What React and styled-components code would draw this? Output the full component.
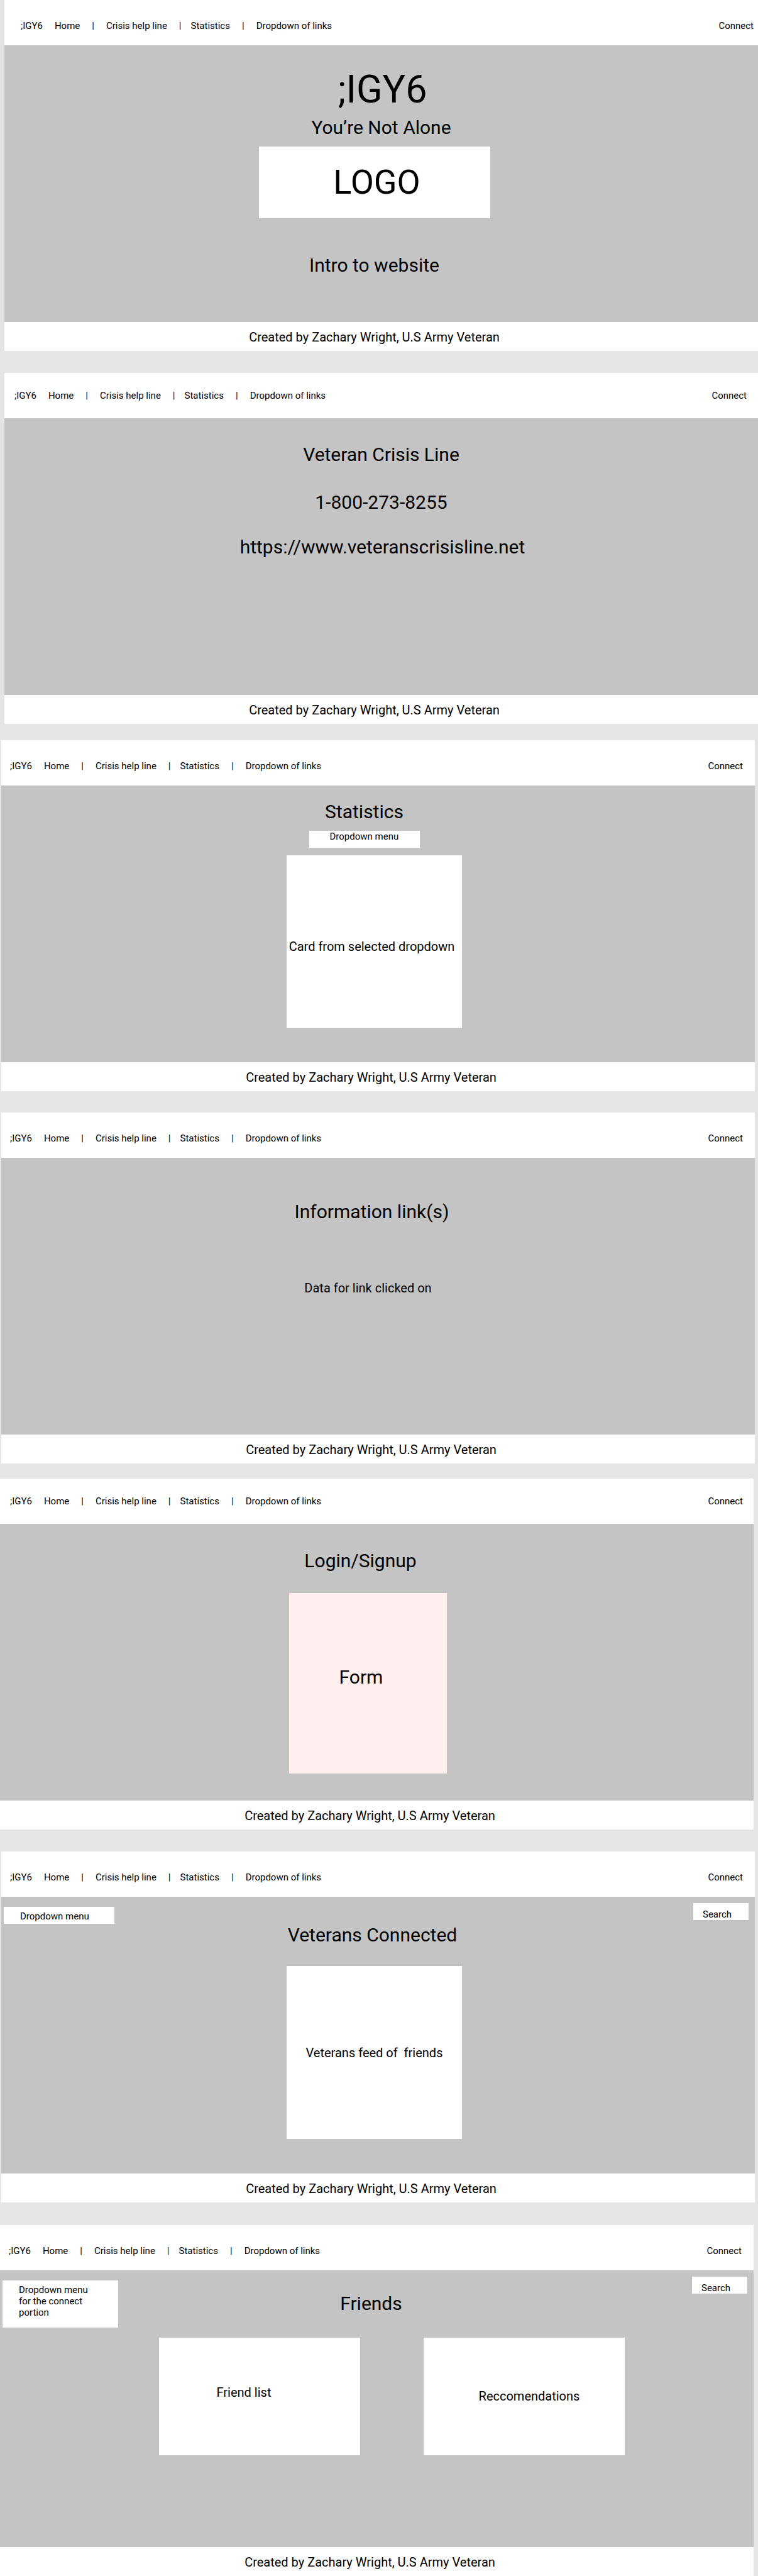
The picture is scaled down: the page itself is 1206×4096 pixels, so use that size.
import React from "react";
import styled, { createGlobalStyle } from "styled-components";

const GlobalStyle = createGlobalStyle`
  *, *::before, *::after { box-sizing: border-box; }
  body {
    margin: 0;
    background: #e5e5e5;
    color: #000;
    font-family: Roboto, "Liberation Sans", sans-serif;
    font-size: 15px;
    line-height: 18px;
  }
  a { color: inherit; text-decoration: none; }
  button, input, select { font: inherit; color: inherit; border: 0; border-radius: 0; }
`;

/* Moves a centred item towards one side by reserving room on the other. */
const side = ({ $room = 0 }) =>
  $room >= 0 ? `margin-right: ${$room}px;` : `margin-left: ${-$room}px;`;

const Board = styled.div`
  display: flex;
  flex-direction: column;
`;

const Frame = styled.section`
  display: flex;
  flex-direction: column;
  margin: ${({ $gap = 0 }) => $gap}px ${({ $right = 0 }) => $right}px 0 ${({ $left = 0 }) => $left}px;
`;

const Header = styled.header`
  display: flex;
  align-items: center;
  justify-content: space-between;
  min-height: 72px;
  padding: ${({ $low }) => ($low ? 10 : 0)}px ${({ $end }) => $end}px 0 ${({ $start }) => $start}px;
  background: #fff;
`;

const Nav = styled.nav`
  display: flex;
  flex-wrap: wrap;
  align-items: center;
`;

const NavLink = styled.a`
  white-space: nowrap;
`;

const Brand = styled(NavLink)`
  margin-right: 19px;
`;

const NavMenu = styled.button`
  padding: 0;
  background: none;
`;

const Divider = styled.span`
  margin: 0 ${({ $tight }) => ($tight ? 15 : 19)}px 0 19px;
`;

const Main = styled.div`
  display: flex;
  flex-direction: column;
  align-items: center;
  min-height: 440px;
  background: #c4c4c4;
`;

const Title = styled.h1`
  margin-top: 34px;
  margin-bottom: 0;
  ${side}
  font-size: 61px;
  font-weight: 400;
  line-height: 72px;
`;

const Heading = styled.h2`
  margin-top: ${({ $top = 0 }) => $top}px;
  margin-bottom: 0;
  ${side}
  font-size: 30px;
  font-weight: 400;
  line-height: 36px;
`;

const Note = styled.p`
  margin-top: ${({ $top = 0 }) => $top}px;
  margin-bottom: ${({ $bottom = 0 }) => $bottom}px;
  ${side}
  font-size: 20px;
  line-height: 24px;
  white-space: pre;
`;

const Card = styled.div`
  display: flex;
  align-items: center;
  justify-content: center;
  width: ${({ $width }) => $width}px;
  max-width: 100%;
  min-height: ${({ $height }) => $height}px;
  margin-top: ${({ $top = 0 }) => $top}px;
  ${side}
  background: ${({ $tint }) => ($tint ? "#ffefee" : "#fff")};
`;

const LogoText = styled.span`
  margin-left: 8px;
  font-size: 54px;
  line-height: 64px;
`;

const FormText = styled(Heading)`
  margin-bottom: 20px;
`;

const Picker = styled.select`
  appearance: none;
  width: 176px;
  height: 27px;
  margin-top: ${({ $top }) => $top}px;
  ${side}
  padding: ${({ $inset }) => $inset};
  background: #fff;
  line-height: 18px;
`;

const MenuButton = styled.button`
  width: 184px;
  min-height: 75px;
  margin-top: 16px;
  padding: 6px 40px 15px 26px;
  background: #fff;
  text-align: left;
`;

const Search = styled.input`
  appearance: none;
  justify-self: end;
  width: 88px;
  height: 27px;
  margin-top: 10px;
  padding: 8px 8px 0 15px;
  background: #fff;
  &::placeholder { color: #000; opacity: 1; }
`;

const TopRow = styled.div`
  display: grid;
  grid-template-columns: 1fr auto 1fr;
  align-items: start;
  align-self: stretch;
  padding: 0 10px 0 4px;
`;

const CardRow = styled.div`
  display: flex;
  flex-wrap: wrap;
  justify-content: center;
  gap: 101px;
  margin-top: 16px;
  ${side}
`;

const Footer = styled.footer`
  display: flex;
  align-items: center;
  justify-content: center;
  min-height: 46px;
  padding: 1px 22px 0 0;
  background: #fff;
  font-size: 20px;
  line-height: 24px;
`;

function Page({ gap, left, right, start, end, low, children }) {
  return (
    <Frame $gap={gap} $left={left} $right={right}>
      <Header $start={start} $end={end} $low={low}>
        <Nav>
          <Brand href="#">;IGY6</Brand>
          <NavLink href="#">Home</NavLink>
          <Divider>|</Divider>
          <NavLink href="#">Crisis help line</NavLink>
          <Divider $tight>|</Divider>
          <NavLink href="#">Statistics</NavLink>
          <Divider>|</Divider>
          <NavMenu type="button" aria-haspopup="menu">Dropdown of links</NavMenu>
        </Nav>
        <NavLink href="#">Connect</NavLink>
      </Header>
      <Main>{children}</Main>
      <Footer>Created by Zachary Wright, U.S Army Veteran</Footer>
    </Frame>
  );
}

export default function App() {
  return (
    <Board>
      <GlobalStyle />

      <Page left={7} start={26} end={7} low>
        <Title $room={-4}>;IGY6</Title>
        <Heading $top={7}>You’re Not Alone</Heading>
        <Card $width={368} $height={114} $top={12} $room={22}>
          <LogoText>LOGO</LogoText>
        </Card>
        <Heading as="p" $top={57} $room={22}>Intro to website</Heading>
      </Page>

      <Page gap={35} left={7} start={16} end={18}>
        <Heading $top={40}>Veteran Crisis Line</Heading>
        <Heading as="a" href="tel:1-800-273-8255" $top={40}>1-800-273-8255</Heading>
        <Heading as="a" href="https://www.veteranscrisisline.net" $top={35} $room={-4}>
          https://www.veteranscrisisline.net
        </Heading>
      </Page>

      <Page gap={26} left={2} right={5} start={14} end={19} low>
        <Heading $top={24} $room={44}>Statistics</Heading>
        <Picker aria-label="Statistic" $top={12} $room={44} $inset="0 0 9px 33px">
          <option>Dropdown menu</option>
        </Picker>
        <Card $width={279} $height={275} $top={12} $room={12}>
          <Note $top={14} $room={8}>Card from selected dropdown</Note>
        </Card>
      </Page>

      <Page gap={34} left={2} right={5} start={14} end={19} low>
        <Heading $top={68} $room={20}>Information link(s)</Heading>
        <Note $top={91} $room={32}>Data for link clicked on</Note>
      </Page>

      <Page gap={24} right={7} start={16} end={17}>
        <Heading $top={41} $room={52}>Login/Signup</Heading>
        <Card $width={251} $height={287} $top={33} $room={28} $tint>
          <FormText as="p" $room={22}>Form</FormText>
        </Card>
      </Page>

      <Page gap={35} left={2} right={5} start={14} end={19} low>
        <TopRow>
          <Picker aria-label="Section" $top={16} $inset="6px 0 3px 26px">
            <option>Dropdown menu</option>
          </Picker>
          <Heading $top={43} $room={12}>Veterans Connected</Heading>
          <Search type="search" aria-label="Search" placeholder="Search" />
        </TopRow>
        <Card $width={279} $height={275} $top={31} $room={12}>
          <Note>{"Veterans feed of  friends"}</Note>
        </Card>
      </Page>

      <Page gap={36} right={7} start={14} end={19} low>
        <TopRow>
          <MenuButton type="button" aria-haspopup="menu">
            Dropdown menu for the connect portion
          </MenuButton>
          <Heading $top={35} $room={12}>Friends</Heading>
          <Search type="search" aria-label="Search" placeholder="Search" />
        </TopRow>
        <CardRow $room={-48}>
          <Card $width={320} $height={187}>
            <Note $bottom={14} $room={50}>Friend list</Note>
          </Card>
          <Card $width={320} $height={187}>
            <Note $bottom={2} $room={-16}>Reccomendations</Note>
          </Card>
        </CardRow>
      </Page>
    </Board>
  );
}
